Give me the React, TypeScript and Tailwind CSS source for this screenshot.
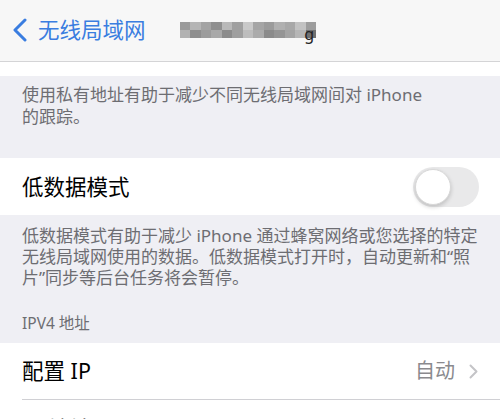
import React from 'react';

// ---------------------------------------------------------------------------
// iOS Wi‑Fi detail page (partial screenshot)
// ---------------------------------------------------------------------------

const FONT = {
  fontFamily: '"Noto Sans", "Noto Sans CJK SC", sans-serif',
};

// blurred network name: mosaic blocks
const MOSAIC: string[][] = [
  ['#9a9a9a', '#b5b5b5', '#a3a3a3', '#8f8f8f', '#b9b9b9', '#a0a0a0', '#c9c9c9', '#a5a5a5', '#9b9b9b', '#b0b0b0', '#a8a8a8', '#c2c2c2', '#9d9d9d'],
  ['#b2b2b2', '#8e8e8e', '#9c9c9c', '#a9a9a9', '#8c8c8c', '#9f9f9f', '#bdbdbd', '#ababab', '#8b8b8b', '#959595', '#a4a4a4', '#b6b6b6', '#6f6f6f'],
];

function BlurredName() {
  return (
    <div className="relative ml-[34px] flex flex-col">
      {MOSAIC.map((row, i) => (
        <div key={i} className="flex">
          {row.map((c, j) => (
            <div key={j} className="h-[8px] w-[10.5px]" style={{ backgroundColor: c }} />
          ))}
        </div>
      ))}
      <span className="absolute right-[2px] top-[4px] text-[16px] leading-none text-[#222]" style={FONT}>g</span>
    </div>
  );
}

function Toggle() {
  return (
    <div className="flex h-[40px] w-[66px] items-center rounded-full bg-[#e9e9ea] p-[2px]">
      <div className="h-[36px] w-[36px] rounded-full border border-[#d8d8d8] bg-white shadow-[0_2px_4px_rgba(0,0,0,0.18)]" />
    </div>
  );
}

export default function App() {
  return (
    <div className="h-[419px] w-[500px] overflow-hidden bg-white" style={FONT}>
      {/* nav bar */}
      <div className="flex h-[62px] items-center border-b border-[#d4d4d6] bg-[#f7f7f7] pb-[2px] pl-[12px]">
        <svg width="16" height="24" viewBox="0 0 16 24" fill="none" stroke="#3a7de0" strokeWidth="3" strokeLinecap="round" strokeLinejoin="round">
          <path d="M13 2L3 12l10 10" />
        </svg>
        <span className="ml-[10px] text-[21.5px] leading-none text-[#3a7de0]">无线局域网</span>
        <BlurredName />
      </div>

      <div className="h-[14px] bg-white" />

      {/* private address footer */}
      <div className="h-[82px] bg-[#efeff4] px-[22px] pt-[8px] text-[17px] leading-[22px] text-[#6d6d72]">
        使用私有地址有助于减少不同无线局域网间对 iPhone
        <br />
        的跟踪。
      </div>

      {/* low data mode */}
      <div className="flex h-[57px] items-center justify-between bg-white pl-[22px] pr-[21px]">
        <span className="text-[21.5px] leading-none text-black">低数据模式</span>
        <Toggle />
      </div>

      <div className="h-[128px] bg-[#efeff4] px-[22px] pt-[10px]">
        <p className="text-[17px] leading-[21px] text-[#6d6d72]">
          低数据模式有助于减少 iPhone 通过蜂窝网络或您选择的特定
          <br />
          无线局域网使用的数据。低数据模式打开时，自动更新和“照
          <br />
          片”同步等后台任务将会暂停。
        </p>
        <p className="mt-[25px] text-[15.5px] leading-[20px] text-[#6d6d72]">IPV4 地址</p>
      </div>

      {/* ipv4 rows */}
      <div className="bg-white pl-[22px]">
        <div className="flex h-[57px] items-center border-b border-[#d0d0d4] pr-[22px]">
          <span className="text-[21.5px] leading-none text-black">配置 IP</span>
          <span className="ml-auto text-[20px] leading-none text-[#8a8a8e]">自动</span>
          <svg className="ml-[14px]" width="9" height="15" viewBox="0 0 9 15" fill="none" stroke="#c4c4c7" strokeWidth="2" strokeLinecap="round" strokeLinejoin="round">
            <path d="M1.5 1.5l6 6-6 6" />
          </svg>
        </div>
        <div className="flex h-[57px] items-center pr-[22px]">
          <span className="text-[21.5px] leading-none text-black">IP 地址</span>
          <span className="ml-auto text-[20px] leading-none text-[#8a8a8e]">192.168.1.100</span>
        </div>
      </div>
    </div>
  );
}
